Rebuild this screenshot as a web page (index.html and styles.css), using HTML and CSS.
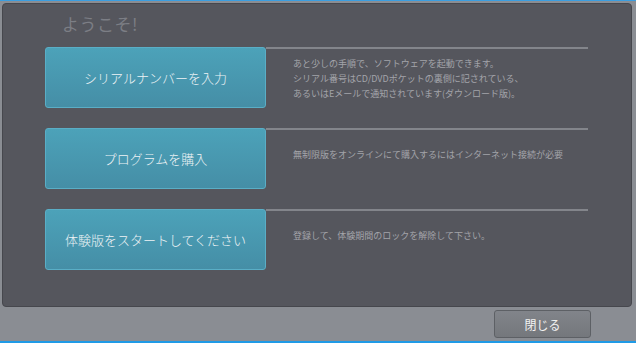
FILE: index.html
```html
<!DOCTYPE html>
<html lang="ja">
<head>
  <meta charset="UTF-8">
  <meta name="viewport" content="width=device-width, initial-scale=1.0">
  <title>ようこそ!</title>
  <link rel="stylesheet" href="styles.css">
</head>
<body>
  <div class="window">
    <div class="panel">
      <h1 class="title">ようこそ!</h1>
      <div class="rows">
        <div class="row">
          <button class="action">シリアルナンバーを入力</button>
          <div class="desc desc-multi">
            <p>あと少しの手順で、ソフトウェアを起動できます。</p>
            <p>シリアル番号はCD/DVDポケットの裏側に記されている、</p>
            <p>あるいはEメールで通知されています(ダウンロード版)。</p>
          </div>
        </div>
        <div class="row">
          <button class="action">プログラムを購入</button>
          <div class="desc">
            <p>無制限版をオンラインにて購入するにはインターネット接続が必要</p>
          </div>
        </div>
        <div class="row">
          <button class="action">体験版をスタートしてください</button>
          <div class="desc">
            <p>登録して、体験期間のロックを解除して下さい。</p>
          </div>
        </div>
      </div>
    </div>
    <div class="footer">
      <button class="close">閉じる</button>
    </div>
  </div>
</body>
</html>
```

FILE: styles.css
```css
html, body { margin: 0; padding: 0; }
body { width: 636px; height: 343px; overflow: hidden; background: #8a8d93; font-family: "Noto Sans CJK JP", "Noto Sans", sans-serif; }
.window { height: 343px; display: flex; flex-direction: column; border-top: 1px solid #3b9ee0; border-bottom: 2px solid #1f9ae6; box-sizing: border-box; background: #8a8d93; }
.panel { margin: 2px 4px 0 2px; height: 304px; box-sizing: border-box; background: #55565d; border: 1px solid #46474d; border-radius: 4px; }
.title { margin: 10px 0 0 59px; font-size: 17px; line-height: 20px; font-weight: normal; color: #7c7e85; letter-spacing: 0.5px; }
.rows { margin-top: 13px; padding-left: 42px; }
.row { display: flex; margin-bottom: 20px; }
.action { width: 221px; height: 61px; flex: none; border: 1px solid #5aaec6; border-radius: 3px; background: linear-gradient(#4ca2b9, #458ea6); color: #eef3f5; font-family: inherit; font-size: 13px; font-weight: 300; padding: 0; }
.desc { width: 322px; flex: none; border-top: 2px solid #83858b; padding: 17px 0 0 27px; box-sizing: border-box; color: #a3a4aa; font-size: 9px; line-height: 15px; }
.desc-multi { padding-top: 7px; }
.desc p { margin: 0; white-space: nowrap; }
.footer { flex: 1; display: flex; justify-content: flex-end; align-items: flex-start; padding: 3px 45px 0 0; }
.close { width: 97px; height: 28px; border: 1px solid #5d6065; border-radius: 3px; background: linear-gradient(#81848a, #74777c); color: #f2f2f2; font-family: inherit; font-size: 12px; padding: 0; }
```
